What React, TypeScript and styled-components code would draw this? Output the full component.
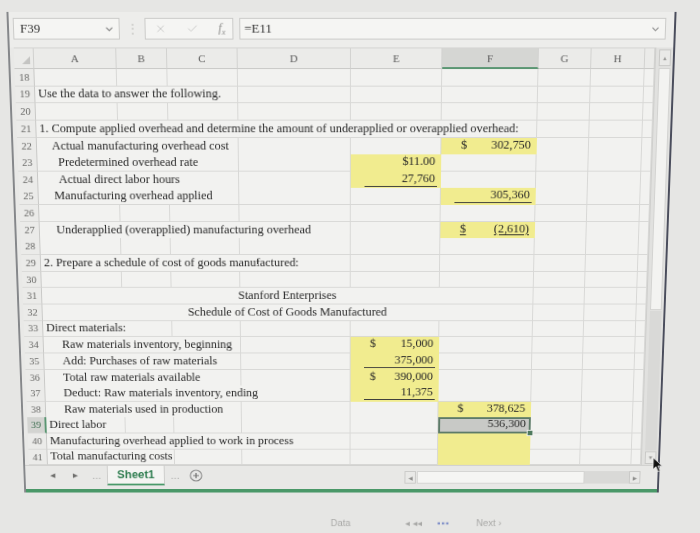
import React from 'react';
import styled, { createGlobalStyle, css } from 'styled-components';
import { ChevronDown, X, Check } from 'lucide-react';

const COLS = [83, 51, 71, 114, 92, 97, 53, 54, 10];
const LETTERS = ['A', 'B', 'C', 'D', 'E', 'F', 'G', 'H', ''];
const ROW_H = 17.65;
const SEL_COL = 5;
const SEL_ROW = 39;
const TEMPLATE = `20px ${COLS.map((w) => `${w}px`).join(' ')}`;

type Fill = 'yellow' | 'selected';

type SheetCell = {
  col: number;
  span?: number;
  text?: string;
  indent?: number;
  center?: boolean;
  amount?: string;
  dollar?: boolean;
  ruled?: boolean;
  underlined?: boolean;
  fill?: Fill;
};

type SheetRow = { num: number; cells: SheetCell[] };

const rows: SheetRow[] = [
  { num: 18, cells: [] },
  { num: 19, cells: [{ col: 0, span: 3, text: 'Use the data to answer the following.' }] },
  { num: 20, cells: [] },
  {
    num: 21,
    cells: [
      {
        col: 0,
        span: 6,
        text: '1. Compute applied overhead and determine the amount of underapplied or overapplied overhead:',
      },
    ],
  },
  {
    num: 22,
    cells: [
      { col: 0, span: 3, text: 'Actual manufacturing overhead cost', indent: 12 },
      { col: 5, fill: 'yellow', dollar: true, amount: '302,750' },
    ],
  },
  {
    num: 23,
    cells: [
      { col: 0, span: 3, text: 'Predetermined overhead rate', indent: 18 },
      { col: 4, fill: 'yellow', amount: '$11.00' },
    ],
  },
  {
    num: 24,
    cells: [
      { col: 0, span: 3, text: 'Actual direct labor hours', indent: 18 },
      { col: 4, fill: 'yellow', amount: '27,760', ruled: true },
    ],
  },
  {
    num: 25,
    cells: [
      { col: 0, span: 3, text: 'Manufacturing overhead applied', indent: 13 },
      { col: 5, fill: 'yellow', amount: '305,360', ruled: true },
    ],
  },
  { num: 26, cells: [] },
  {
    num: 27,
    cells: [
      { col: 0, span: 4, text: 'Underapplied (overapplied) manufacturing overhead', indent: 14 },
      { col: 5, fill: 'yellow', dollar: true, amount: '(2,610)', underlined: true },
    ],
  },
  { num: 28, cells: [] },
  { num: 29, cells: [{ col: 0, span: 4, text: '2. Prepare a schedule of cost of goods manufactured:' }] },
  { num: 30, cells: [] },
  { num: 31, cells: [{ col: 0, span: 6, text: 'Stanford Enterprises', center: true }] },
  { num: 32, cells: [{ col: 0, span: 6, text: 'Schedule of Cost of Goods Manufactured', center: true }] },
  { num: 33, cells: [{ col: 0, span: 2, text: 'Direct materials:' }] },
  {
    num: 34,
    cells: [
      { col: 0, span: 3, text: 'Raw materials inventory, beginning', indent: 16 },
      { col: 4, fill: 'yellow', dollar: true, amount: '15,000' },
    ],
  },
  {
    num: 35,
    cells: [
      { col: 0, span: 3, text: 'Add: Purchases of raw materials', indent: 16 },
      { col: 4, fill: 'yellow', amount: '375,000', ruled: true },
    ],
  },
  {
    num: 36,
    cells: [
      { col: 0, span: 3, text: 'Total raw materials available', indent: 16 },
      { col: 4, fill: 'yellow', dollar: true, amount: '390,000' },
    ],
  },
  {
    num: 37,
    cells: [
      { col: 0, span: 4, text: 'Deduct: Raw materials inventory, ending', indent: 16 },
      { col: 4, fill: 'yellow', amount: '11,375', ruled: true },
    ],
  },
  {
    num: 38,
    cells: [
      { col: 0, span: 3, text: 'Raw materials used in production', indent: 16 },
      { col: 5, fill: 'yellow', dollar: true, amount: '378,625' },
    ],
  },
  {
    num: 39,
    cells: [
      { col: 0, text: 'Direct labor' },
      { col: 5, fill: 'selected', amount: '536,300' },
    ],
  },
  {
    num: 40,
    cells: [
      { col: 0, span: 4, text: 'Manufacturing overhead applied to work in process' },
      { col: 5, fill: 'yellow' },
    ],
  },
  {
    num: 41,
    cells: [
      { col: 0, span: 2, text: 'Total manufacturing costs' },
      { col: 5, fill: 'yellow' },
    ],
  },
];

export default function App() {
  return (
    <>
      <GlobalStyle />
      <Photo>
        <Window>
          <FormulaBar>
            <NameBox>
              F39
              <ChevronDown size={11} color="#7a7a7a" strokeWidth={2.2} />
            </NameBox>
            <Dots>⋮</Dots>
            <FxBox>
              <X size={12} color="#c2c2c0" strokeWidth={1.6} />
              <Check size={12} color="#c2c2c0" strokeWidth={1.6} />
              <FxLabel>
                f<sub>x</sub>
              </FxLabel>
            </FxBox>
            <FormulaInput>
              =E11
              <ChevronDown size={11} color="#8a8a8a" strokeWidth={2.2} />
            </FormulaInput>
          </FormulaBar>

          <Sheet>
            <Grid>
              <HeaderLine>
                <Corner>
                  <svg width="8" height="8" viewBox="0 0 8 8">
                    <polygon points="8,0 8,8 0,8" fill="#c4c4c2" />
                  </svg>
                </Corner>
                {LETTERS.map((letter, i) => (
                  <ColHeader key={i} $selected={i === SEL_COL}>
                    {letter}
                  </ColHeader>
                ))}
              </HeaderLine>
              {rows.map((row) => (
                <SheetLine key={row.num} row={row} />
              ))}
            </Grid>
            <VScroll>
              <ScrollButton>▲</ScrollButton>
              <VThumb />
              <VTrack />
              <ScrollButton $small>▼</ScrollButton>
            </VScroll>
          </Sheet>

          <TabBar>
            <NavArrow>◀</NavArrow>
            <NavArrow>▶</NavArrow>
            <Ellipsis>…</Ellipsis>
            <SheetTab>Sheet1</SheetTab>
            <Ellipsis>…</Ellipsis>
            <AddSheet>
              <svg width="14" height="14" viewBox="0 0 14 14">
                <circle cx="7" cy="7" r="6" fill="none" stroke="#8a8a8a" strokeWidth="1.1" />
                <path d="M7 4v6M4 7h6" stroke="#6f6f6f" strokeWidth="1.2" />
              </svg>
            </AddSheet>
            <Spacer />
            <HScroll>
              <HButton>◀</HButton>
              <HThumb />
              <HTrack />
              <HButton>▶</HButton>
            </HScroll>
          </TabBar>
          <GreenEdge />

          <Cursor width="12" height="18" viewBox="0 0 12 18">
            <path d="M1 1 L1 14 L4 11 L6.5 16.5 L8.5 15.6 L6 10.2 L10.5 10.2 Z" fill="#111" stroke="#eee" strokeWidth="0.8" />
          </Cursor>
        </Window>

        <BottomHints>
          <Hint $gap={330}>Data</Hint>
          <Hint $gap={58}>◂ ◂◂</Hint>
          <HintBlue>▪▪▪</HintBlue>
          <Hint $gap={28}>Next ›</Hint>
        </BottomHints>
      </Photo>
    </>
  );
}

function SheetLine({ row }: { row: SheetRow }) {
  const out: React.ReactNode[] = [];
  let c = 0;
  while (c < COLS.length) {
    const cell = row.cells.find((x) => x.col === c);
    const span = cell?.span ?? 1;
    out.push(<DataCell key={c} cell={cell} span={span} />);
    c += span;
  }
  return (
    <RowLine>
      <RowHeader $selected={row.num === SEL_ROW}>{row.num}</RowHeader>
      {out}
    </RowLine>
  );
}

function DataCell({ cell, span }: { cell?: SheetCell; span: number }) {
  if (!cell) return <Cell $span={span} />;
  const hasAmount = cell.amount !== undefined;
  return (
    <Cell
      $span={span}
      $fill={cell.fill}
      $center={cell.center}
      $indent={cell.indent ?? 0}
      $amount={hasAmount}
    >
      {cell.text}
      {hasAmount && (
        <Amount $ruled={cell.ruled} $dollar={cell.dollar}>
          {cell.dollar && <Figure $underlined={cell.underlined}>$</Figure>}
          <Figure $underlined={cell.underlined}>{cell.amount}</Figure>
        </Amount>
      )}
      {cell.fill === 'selected' && <FillHandle />}
    </Cell>
  );
}

const GlobalStyle = createGlobalStyle`
  html, body {
    margin: 0;
    padding: 0;
    width: 700px;
    height: 533px;
    overflow: hidden;
    background: #e6e6e4;
  }
  body {
    font-family: "Liberation Serif", "Times New Roman", serif;
    color: #262626;
  }
`;

/* the reference is a photo of a monitor: a slight tilt narrows the bottom */
const Photo = styled.div`
  width: 700px;
  height: 533px;
  padding-top: 12px;
  box-sizing: border-box;
  transform-origin: 341.5px 0;
  transform: perspective(1000px) rotateX(-6.3deg);
`;

const Window = styled.div`
  position: relative;
  margin-left: 6px;
  width: 671px;
  box-sizing: border-box;
  padding-top: 6px;
  border-left: 2px solid #85878a;
  border-right: 2px solid #4a4d5c;
  background: #ededeb;
`;

const FormulaBar = styled.div`
  display: flex;
  align-items: center;
  height: 22px;
  padding-left: 4px;
`;

const boxBase = css`
  box-sizing: border-box;
  height: 22px;
  display: flex;
  align-items: center;
  border: 1px solid #cbcbc9;
  background: #f5f5f3;
`;

const NameBox = styled.div`
  ${boxBase};
  width: 107px;
  padding: 0 4px 0 6px;
  justify-content: space-between;
  font-size: 13px;
  color: #333;
`;

const Dots = styled.div`
  width: 25px;
  text-align: center;
  font-size: 12px;
  color: #c4c4c2;
`;

const FxBox = styled.div`
  ${boxBase};
  width: 89px;
  padding: 0 7px 0 9px;
  justify-content: space-between;
`;

const FxLabel = styled.span`
  font-style: italic;
  font-size: 12px;
  color: #8c8c8a;

  sub {
    font-size: 8px;
  }
`;

const FormulaInput = styled.div`
  ${boxBase};
  width: 428px;
  margin-left: 6px;
  padding: 0 4px 0 4px;
  justify-content: space-between;
  font-size: 13px;
  color: #333;
`;

const Sheet = styled.div`
  display: flex;
  margin-top: 8px;
  padding-left: 4px;
  background: #e9e9e7;
`;

const Grid = styled.div`
  display: flex;
  flex-direction: column;
  width: 645px;
`;

const HeaderLine = styled.div`
  display: grid;
  grid-template-columns: ${TEMPLATE};
  height: 22px;
  border-top: 1px solid #d4d4d2;
  box-sizing: border-box;
`;

const Corner = styled.div`
  display: flex;
  align-items: flex-end;
  justify-content: flex-end;
  padding: 0 3px 4px 0;
  border-right: 1px solid #d0d0ce;
  border-bottom: 1px solid #c9c9c7;
  background: #ebebe9;
`;

const ColHeader = styled.div<{ $selected?: boolean }>`
  display: flex;
  align-items: center;
  justify-content: center;
  box-sizing: border-box;
  font-size: 11px;
  color: #5a5a5a;
  background: ${(p) => (p.$selected ? '#d5d6d3' : '#ebebe9')};
  border-right: 1px solid #d2d2d0;
  border-bottom: ${(p) => (p.$selected ? '2px solid #5a9672' : '1px solid #c9c9c7')};
`;

const RowLine = styled.div`
  display: grid;
  grid-template-columns: ${TEMPLATE};
  height: ${ROW_H}px;
`;

const RowHeader = styled.div<{ $selected?: boolean }>`
  display: flex;
  align-items: center;
  justify-content: center;
  box-sizing: border-box;
  font-size: 10.5px;
  color: ${(p) => (p.$selected ? '#3d6e50' : '#676765')};
  background: ${(p) => (p.$selected ? '#d3d4d1' : '#ebebe9')};
  border-right: ${(p) => (p.$selected ? '2px solid #5a9672' : '1px solid #c9c9c7')};
  border-bottom: 1px solid #d9d9d7;
`;

const fills: Record<Fill, string> = {
  yellow: '#f1ec8f',
  selected: '#c8c9c6',
};

const Cell = styled.div<{
  $span: number;
  $fill?: Fill;
  $center?: boolean;
  $indent?: number;
  $amount?: boolean;
}>`
  grid-column: span ${(p) => p.$span};
  position: relative;
  display: flex;
  align-items: flex-end;
  justify-content: ${(p) => (p.$center ? 'center' : 'flex-start')};
  box-sizing: border-box;
  padding: 0 ${(p) => (p.$amount ? 0 : 3)}px 1px ${(p) => (p.$amount ? 0 : 3 + (p.$indent ?? 0))}px;
  white-space: nowrap;
  font-size: 12.4px;
  line-height: 15px;
  color: #272727;
  background: ${(p) => (p.$fill ? fills[p.$fill] : '#f2f2f0')};
  border-right: 1px solid ${(p) => (p.$fill === 'yellow' ? fills.yellow : '#d8d8d6')};
  border-bottom: 1px solid ${(p) => (p.$fill === 'yellow' ? fills.yellow : '#d8d8d6')};
  ${(p) =>
    p.$fill === 'selected' &&
    css`
      z-index: 1;
      border: none;
      box-shadow: inset 0 0 0 2px #5d7b68;
      padding-bottom: 2px;
    `}
`;

const Amount = styled.span<{ $ruled?: boolean; $dollar?: boolean }>`
  flex: 1;
  display: flex;
  justify-content: ${(p) => (p.$dollar ? 'space-between' : 'flex-end')};
  margin: 0 3px 0 14px;
  padding: 0 2px 0 6px;
  border-bottom: 1px solid ${(p) => (p.$ruled ? '#3c3c3a' : 'transparent')};
`;

const Figure = styled.span<{ $underlined?: boolean }>`
  text-decoration: ${(p) => (p.$underlined ? 'underline' : 'none')};
  text-underline-offset: 2px;
`;

const FillHandle = styled.span`
  position: absolute;
  right: -3px;
  bottom: -3px;
  width: 5px;
  height: 5px;
  background: #4f7a5e;
  border: 1px solid #f2f2f0;
`;

const VScroll = styled.div`
  width: 18px;
  box-sizing: border-box;
  display: flex;
  flex-direction: column;
  padding: 2px 2px 1px 3px;
  background: #e1e1df;
  border-left: 1px solid #cfcfcd;
`;

const ScrollButton = styled.div<{ $small?: boolean }>`
  height: ${(p) => (p.$small ? 14 : 17)}px;
  display: flex;
  align-items: center;
  justify-content: center;
  font-size: 6px;
  color: #9a9a98;
  background: #e9e9e7;
  border: 1px solid #c9c9c7;
  box-sizing: border-box;
`;

const VThumb = styled.div`
  height: 252px;
  margin-top: 2px;
  background: #f3f3f1;
  border: 1px solid #d3d3d1;
`;

const VTrack = styled.div`
  flex: 1;
  background: #d9d9d7;
  margin: 1px 0;
`;

const TabBar = styled.div`
  display: flex;
  align-items: flex-start;
  height: 27px;
  box-sizing: border-box;
  padding-left: 16px;
  background: #e8e8e6;
  border-top: 1px solid #cdcdcb;
`;

const NavArrow = styled.div`
  width: 24px;
  height: 22px;
  display: flex;
  align-items: center;
  justify-content: center;
  font-size: 7px;
  color: #6f6f6d;
`;

const Ellipsis = styled.div`
  width: 22px;
  height: 22px;
  display: flex;
  align-items: center;
  justify-content: center;
  font-family: "Liberation Sans", Arial, sans-serif;
  font-size: 10px;
  color: #9a9a98;
`;

const SheetTab = styled.div`
  width: 61px;
  height: 22px;
  box-sizing: border-box;
  display: flex;
  align-items: center;
  justify-content: center;
  font-family: "Liberation Sans", Arial, sans-serif;
  font-weight: bold;
  font-size: 12px;
  color: #2f7d50;
  background: #f4f4f2;
  border-left: 1px solid #cdcdcb;
  border-right: 1px solid #cdcdcb;
  border-bottom: 2px solid #4a9a6a;
`;

const AddSheet = styled.div`
  height: 22px;
  display: flex;
  align-items: center;
  margin-left: 4px;
`;

const Spacer = styled.div`
  flex: 1;
`;

const HScroll = styled.div`
  width: 249px;
  height: 14px;
  margin: 6px 18px 0 0;
  display: flex;
`;

const HButton = styled.div`
  width: 12px;
  display: flex;
  align-items: center;
  justify-content: center;
  font-size: 6px;
  color: #8e8e8c;
  background: #e9e9e7;
  border: 1px solid #c9c9c7;
  box-sizing: border-box;
`;

const HThumb = styled.div`
  width: 177px;
  margin-left: 1px;
  background: #f5f5f3;
  border: 1px solid #d3d3d1;
  box-sizing: border-box;
`;

const HTrack = styled.div`
  flex: 1;
  background: #d9d9d7;
`;

const GreenEdge = styled.div`
  height: 4px;
  background: #4a9868;
`;

const Cursor = styled.svg`
  position: absolute;
  left: 661px;
  top: 472px;
`;

const BottomHints = styled.div`
  display: flex;
  margin-top: 29px;
  font-family: "Liberation Sans", Arial, sans-serif;
  font-size: 10px;
  line-height: 12px;
  filter: blur(0.6px);
`;

const Hint = styled.span<{ $gap: number }>`
  margin-left: ${(p) => p.$gap}px;
  color: #a9a9a7;
`;

const HintBlue = styled.span`
  margin-left: 16px;
  color: #8090c8;
  letter-spacing: 1px;
`;
